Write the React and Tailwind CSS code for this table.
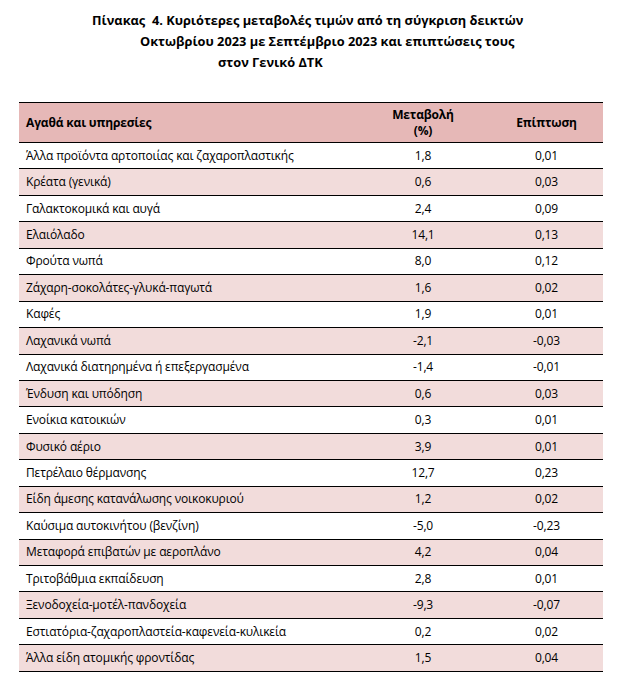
const rows = [
  ["Άλλα προϊόντα αρτοποιίας και ζαχαροπλαστικής", "1,8", "0,01"],
  ["Κρέατα (γενικά)", "0,6", "0,03"],
  ["Γαλακτοκομικά και αυγά", "2,4", "0,09"],
  ["Ελαιόλαδο", "14,1", "0,13"],
  ["Φρούτα νωπά", "8,0", "0,12"],
  ["Ζάχαρη-σοκολάτες-γλυκά-παγωτά", "1,6", "0,02"],
  ["Καφές", "1,9", "0,01"],
  ["Λαχανικά νωπά", "-2,1", "-0,03"],
  ["Λαχανικά διατηρημένα ή επεξεργασμένα", "-1,4", "-0,01"],
  ["Ένδυση και υπόδηση", "0,6", "0,03"],
  ["Ενοίκια κατοικιών", "0,3", "0,01"],
  ["Φυσικό αέριο", "3,9", "0,01"],
  ["Πετρέλαιο θέρμανσης", "12,7", "0,23"],
  ["Είδη άμεσης κατανάλωσης νοικοκυριού", "1,2", "0,02"],
  ["Καύσιμα αυτοκινήτου (βενζίνη)", "-5,0", "-0,23"],
  ["Μεταφορά επιβατών με αεροπλάνο", "4,2", "0,04"],
  ["Τριτοβάθμια εκπαίδευση", "2,8", "0,01"],
  ["Ξενοδοχεία-μοτέλ-πανδοχεία", "-9,3", "-0,07"],
  ["Εστιατόρια-ζαχαροπλαστεία-καφενεία-κυλικεία", "0,2", "0,02"],
  ["Άλλα είδη ατομικής φροντίδας", "1,5", "0,04"],
];

export default function App() {
  return (
    <div
      className="w-[625px] h-[685px] bg-white text-black overflow-hidden"
      style={{ fontFamily: '"Open Sans", "Noto Sans", sans-serif' }}
    >
      <div className="pt-[10px] flex flex-col text-[12.8px] font-bold leading-[21px]">
        <div className="pl-[92px]">Πίνακας&nbsp; 4. Κυριότερες μεταβολές τιμών από τη σύγκριση δεικτών</div>
        <div className="pl-[140px]">Οκτωβρίου 2023 με Σεπτέμβριο 2023 και επιπτώσεις τους</div>
        <div className="pl-[218px]">στον Γενικό ΔΤΚ</div>
      </div>
      <div className="ml-[19px] mt-[29px] w-[584px] border-t border-black text-[12px] tracking-[-0.15px]">
        <div className="flex h-[40px] items-center bg-[#e6b8b7] border-b border-black font-bold">
          <div className="w-[337px] pl-[7px]">Αγαθά και υπηρεσίες</div>
          <div className="w-[134px] text-center leading-[16px] pt-[1px]">
            Μεταβολή
            <br />
            (%)
          </div>
          <div className="w-[113px] text-center">Επίπτωση</div>
        </div>
        {rows.map((r, i) => (
          <div
            key={i}
            className={`flex h-[26.45px] items-center border-b border-black ${i % 2 === 1 ? "bg-[#f2dcdb]" : "bg-white"}`}
          >
            <div className="w-[337px] pl-[7px]">{r[0]}</div>
            <div className="w-[134px] text-center">{r[1]}</div>
            <div className="w-[113px] text-center">{r[2]}</div>
          </div>
        ))}
      </div>
    </div>
  );
}
